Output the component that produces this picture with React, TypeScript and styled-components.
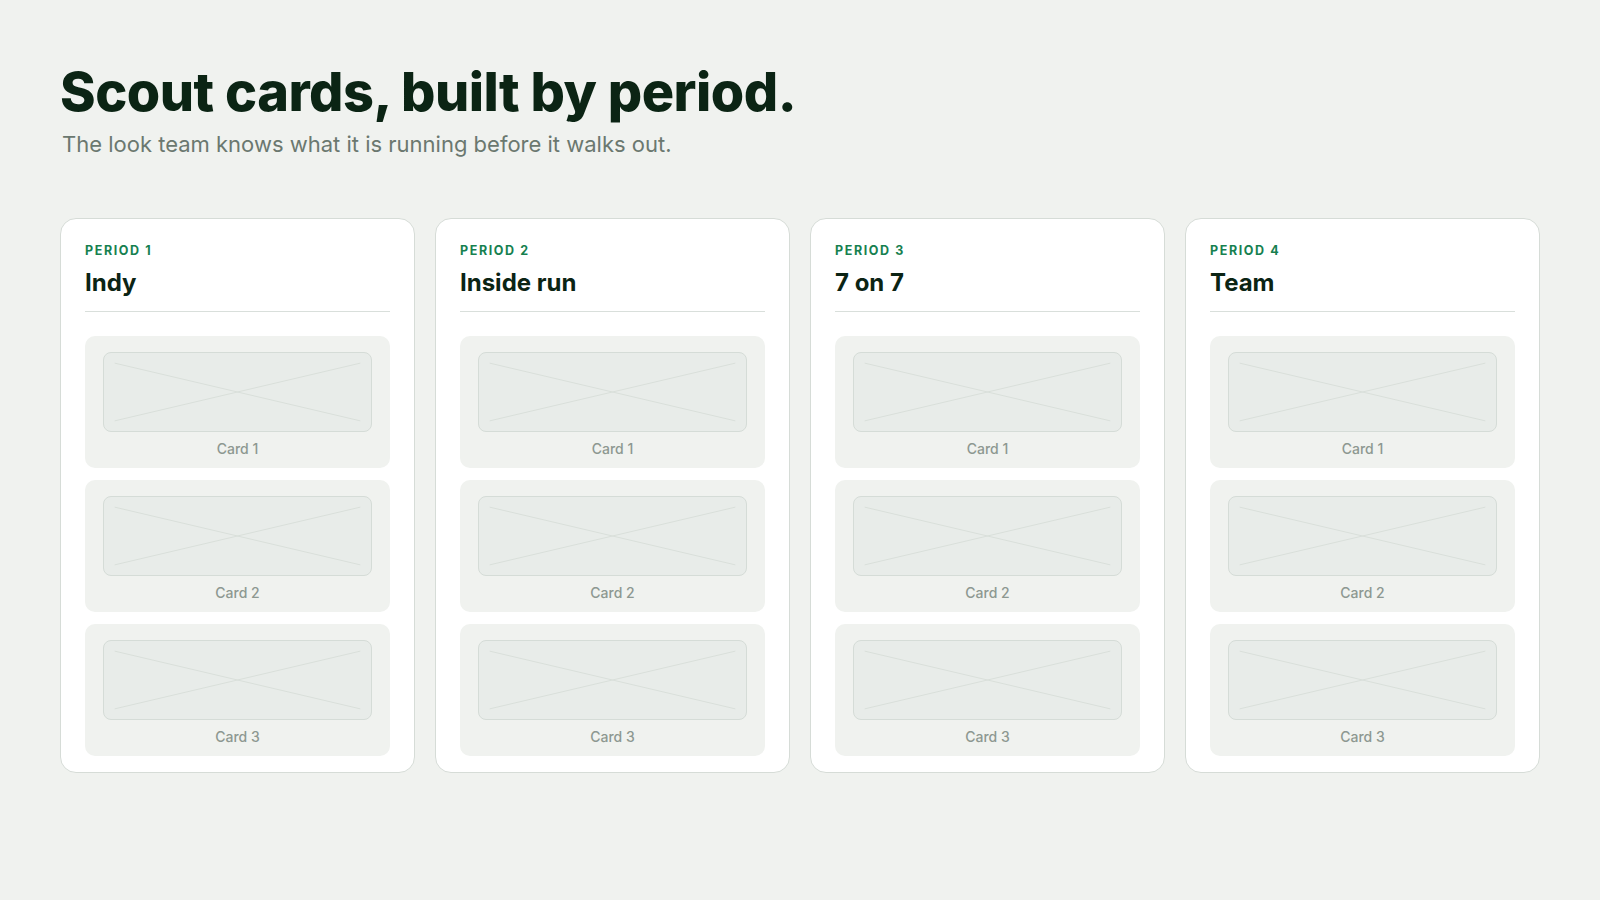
import React from 'react'
import styled, { createGlobalStyle } from 'styled-components'

const periods = [
  { label: 'Period 1', name: 'Indy' },
  { label: 'Period 2', name: 'Inside run' },
  { label: 'Period 3', name: '7 on 7' },
  { label: 'Period 4', name: 'Team' },
]

const cards = ['Card 1', 'Card 2', 'Card 3']

const GlobalStyle = createGlobalStyle`
  html, body {
    margin: 0;
    background: #f0f2ef;
  }
  body {
    font-family: Inter, "Liberation Sans", sans-serif;
    -webkit-font-smoothing: antialiased;
  }
`

const Page = styled.div`
  min-height: 900px;
  box-sizing: border-box;
  padding: 60px 60px 0;
  display: flex;
  flex-direction: column;
`

const Header = styled.header`
  display: flex;
  flex-direction: column;
  gap: 6px;
  margin-bottom: 60px;
`

const Title = styled.h1`
  margin: 0;
  font-family: Inter, "Liberation Sans", sans-serif;
  font-weight: 800;
  font-size: 54px;
  line-height: 64px;
  letter-spacing: -0.5px;
  color: #0b2414;
`

const Subtitle = styled.p`
  margin: 0 0 0 2px;
  font-size: 22px;
  line-height: 28px;
  color: #6b786f;
`

const Columns = styled.div`
  display: grid;
  grid-template-columns: repeat(4, 1fr);
  gap: 20px;
`

const Column = styled.section`
  background: #ffffff;
  border: 1px solid #d6dcd7;
  border-radius: 16px;
  padding: 24px 24px 16px;
  display: flex;
  flex-direction: column;
`

const Period = styled.div`
  font-size: 12.5px;
  font-weight: 700;
  letter-spacing: 1.6px;
  text-transform: uppercase;
  color: #16804f;
  line-height: 16px;
`

const Name = styled.h2`
  margin: 8px 0 0;
  font-size: 24px;
  font-weight: 700;
  line-height: 32px;
  color: #0b2414;
  padding-bottom: 12px;
  border-bottom: 1px solid #d9dfdb;
`

const Stack = styled.div`
  display: flex;
  flex-direction: column;
  gap: 12px;
  margin-top: 24px;
`

const Tile = styled.div`
  background: #f0f2ef;
  border-radius: 10px;
  padding: 16px 18px 10px;
  display: flex;
  flex-direction: column;
  align-items: stretch;
`

const Placeholder = styled.div`
  height: 80px;
  box-sizing: border-box;
  border: 1px solid #d5dcd7;
  border-radius: 8px;
  background: #e8ece9;
  overflow: hidden;

  svg {
    display: block;
    width: 100%;
    height: 100%;
  }
`

const TileLabel = styled.div`
  margin-top: 8px;
  text-align: center;
  font-size: 14px;
  font-weight: 500;
  line-height: 18px;
  color: #8d9891;
`

const Cross: React.FC = () => (
  <svg viewBox="0 0 100 100" preserveAspectRatio="none">
    <line x1="4" y1="13" x2="96" y2="87" stroke="#d9dfda" strokeWidth="1" vectorEffect="non-scaling-stroke" />
    <line x1="4" y1="87" x2="96" y2="13" stroke="#d9dfda" strokeWidth="1" vectorEffect="non-scaling-stroke" />
  </svg>
)

const App: React.FC = () => (
  <>
    <GlobalStyle />
    <Page>
      <Header>
        <Title>Scout cards, built by period.</Title>
        <Subtitle>The look team knows what it is running before it walks out.</Subtitle>
      </Header>
      <Columns>
        {periods.map((p) => (
          <Column key={p.label}>
            <Period>{p.label}</Period>
            <Name>{p.name}</Name>
            <Stack>
              {cards.map((c) => (
                <Tile key={c}>
                  <Placeholder>
                    <Cross />
                  </Placeholder>
                  <TileLabel>{c}</TileLabel>
                </Tile>
              ))}
            </Stack>
          </Column>
        ))}
      </Columns>
    </Page>
  </>
)

export default App
